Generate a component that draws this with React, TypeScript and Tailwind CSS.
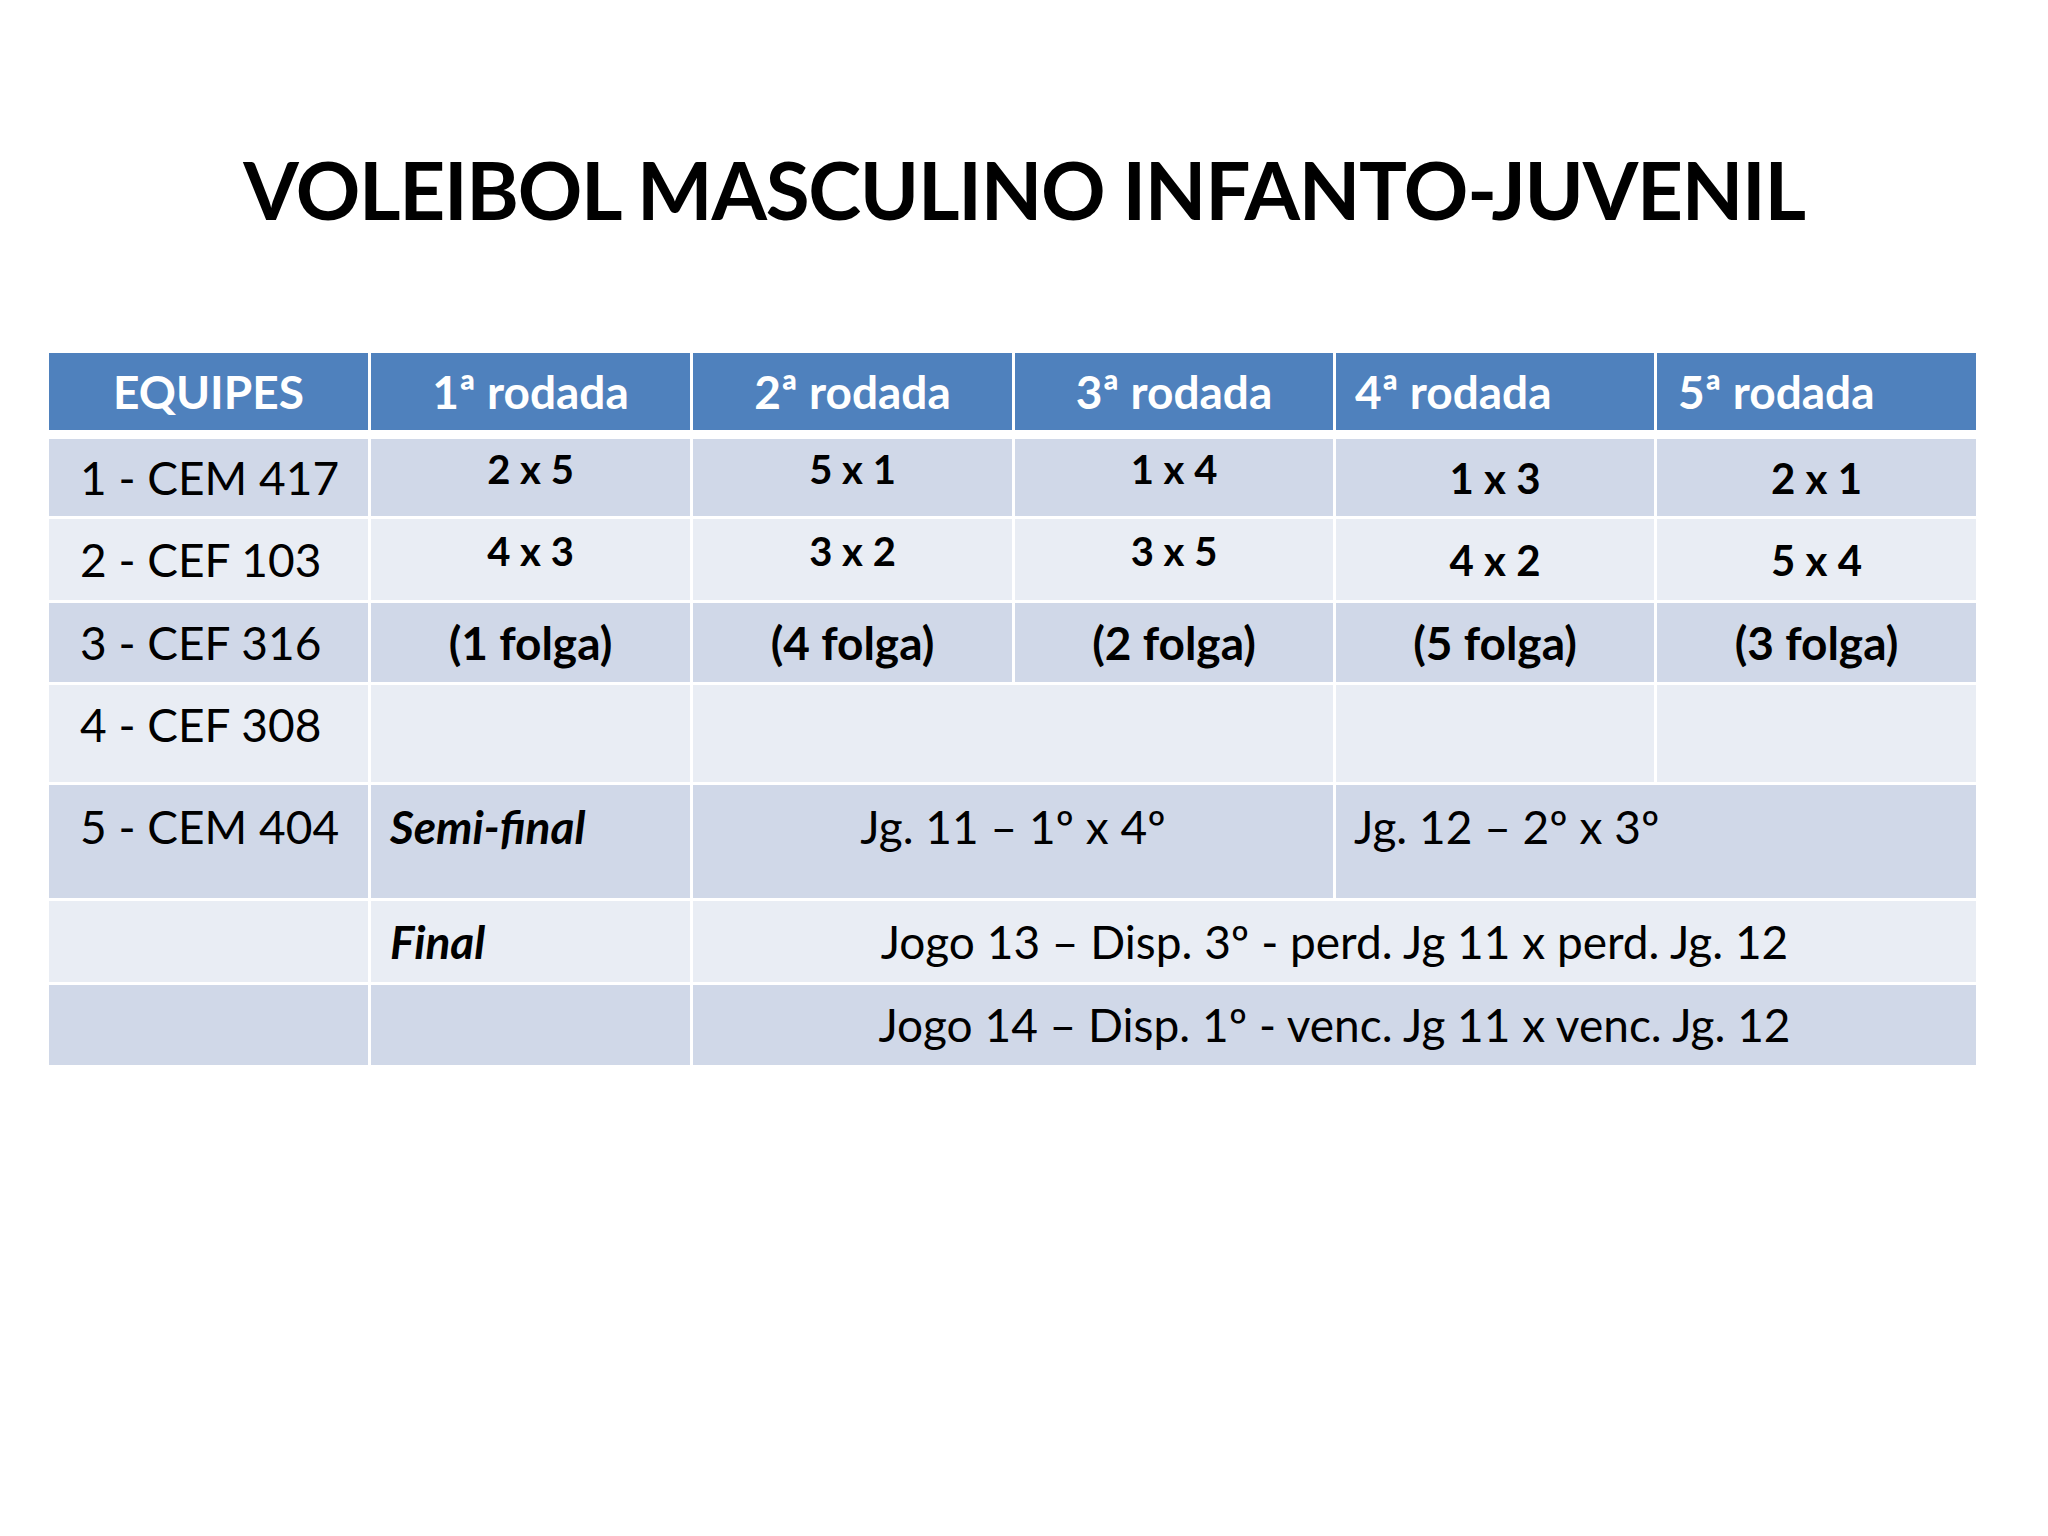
import React from 'react';

const dark = 'bg-[#d0d8e8]';
const light = 'bg-[#e9edf4]';

interface CellProps {
  bg: string;
  className?: string;
  children?: React.ReactNode;
}

function Cell({ bg, className = '', children }: CellProps) {
  return <div className={`flex leading-none whitespace-nowrap ${bg} ${className}`}>{children}</div>;
}

const team = 'items-center pl-[31px] text-[46px]';
const smallScore = 'items-center justify-center pb-[18px] text-[40px] font-bold';
const bigScore = 'items-center justify-center text-[42px] font-bold';
const folga = 'items-center justify-center text-[46px] font-bold';
const head = 'mb-[6px] items-center text-[46px] font-bold text-white';

export default function App() {
  return (
    <div className="min-h-screen bg-white font-[Lato,sans-serif] text-black">
      <h1 className="pt-[149px] text-center text-[80px] font-bold leading-none tracking-[-1.3px]">
        VOLEIBOL MASCULINO INFANTO-JUVENIL
      </h1>

      <div className="ml-[49px] mt-[124px] grid w-[1927px] grid-cols-[319px_319px_319px_318px_318px_319px] grid-rows-[83px_77px_81px_79px_97px_113px_81px_80px] gap-[3px]">
        {/* Header */}
        <Cell bg="bg-[#4f81bd]" className={`${head} justify-center`}>EQUIPES</Cell>
        <Cell bg="bg-[#4f81bd]" className={`${head} justify-center`}>1ª rodada</Cell>
        <Cell bg="bg-[#4f81bd]" className={`${head} justify-center`}>2ª rodada</Cell>
        <Cell bg="bg-[#4f81bd]" className={`${head} justify-center`}>3ª rodada</Cell>
        <Cell bg="bg-[#4f81bd]" className={`${head} pl-[19px]`}>4ª rodada</Cell>
        <Cell bg="bg-[#4f81bd]" className={`${head} pl-[21px]`}>5ª rodada</Cell>

        {/* Row 1 */}
        <Cell bg={dark} className={team}>1 - CEM 417</Cell>
        <Cell bg={dark} className={smallScore}>2 x 5</Cell>
        <Cell bg={dark} className={smallScore}>5 x 1</Cell>
        <Cell bg={dark} className={smallScore}>1 x 4</Cell>
        <Cell bg={dark} className={bigScore}>1 x 3</Cell>
        <Cell bg={dark} className={bigScore}>2 x 1</Cell>

        {/* Row 2 */}
        <Cell bg={light} className={team}>2 - CEF 103</Cell>
        <Cell bg={light} className={smallScore}>4 x 3</Cell>
        <Cell bg={light} className={smallScore}>3 x 2</Cell>
        <Cell bg={light} className={smallScore}>3 x 5</Cell>
        <Cell bg={light} className={bigScore}>4 x 2</Cell>
        <Cell bg={light} className={bigScore}>5 x 4</Cell>

        {/* Row 3 */}
        <Cell bg={dark} className={team}>3 - CEF 316</Cell>
        <Cell bg={dark} className={folga}>(1 folga)</Cell>
        <Cell bg={dark} className={folga}>(4 folga)</Cell>
        <Cell bg={dark} className={folga}>(2 folga)</Cell>
        <Cell bg={dark} className={folga}>(5 folga)</Cell>
        <Cell bg={dark} className={folga}>(3 folga)</Cell>

        {/* Row 4 */}
        <Cell bg={light} className="pl-[31px] pt-[17px] text-[46px]">4 - CEF 308</Cell>
        <Cell bg={light} />
        <Cell bg={light} className="col-span-2" />
        <Cell bg={light} />
        <Cell bg={light} />

        {/* Row 5 - semifinal */}
        <Cell bg={dark} className="pl-[31px] pt-[19px] text-[46px]">5 - CEM 404</Cell>
        <Cell bg={dark} className="pl-[19px] pt-[19px] text-[46px] font-bold italic">Semi-final</Cell>
        <Cell bg={dark} className="col-span-2 justify-center pt-[19px] text-[46px]">Jg. 11 – 1º x 4º</Cell>
        <Cell bg={dark} className="col-span-2 pl-[18px] pt-[19px] text-[46px]">Jg. 12 – 2º x 3º</Cell>

        {/* Row 6 - final */}
        <Cell bg={light} />
        <Cell bg={light} className="items-center pl-[19px] text-[46px] font-bold italic">Final</Cell>
        <Cell bg={light} className="col-span-4 items-center justify-center text-[46px]">
          Jogo 13 – Disp. 3º - perd. Jg 11 x perd. Jg. 12
        </Cell>

        {/* Row 7 */}
        <Cell bg={dark} />
        <Cell bg={dark} />
        <Cell bg={dark} className="col-span-4 items-center justify-center text-[46px]">
          Jogo 14 – Disp. 1º - venc. Jg 11 x venc. Jg. 12
        </Cell>
      </div>
    </div>
  );
}
